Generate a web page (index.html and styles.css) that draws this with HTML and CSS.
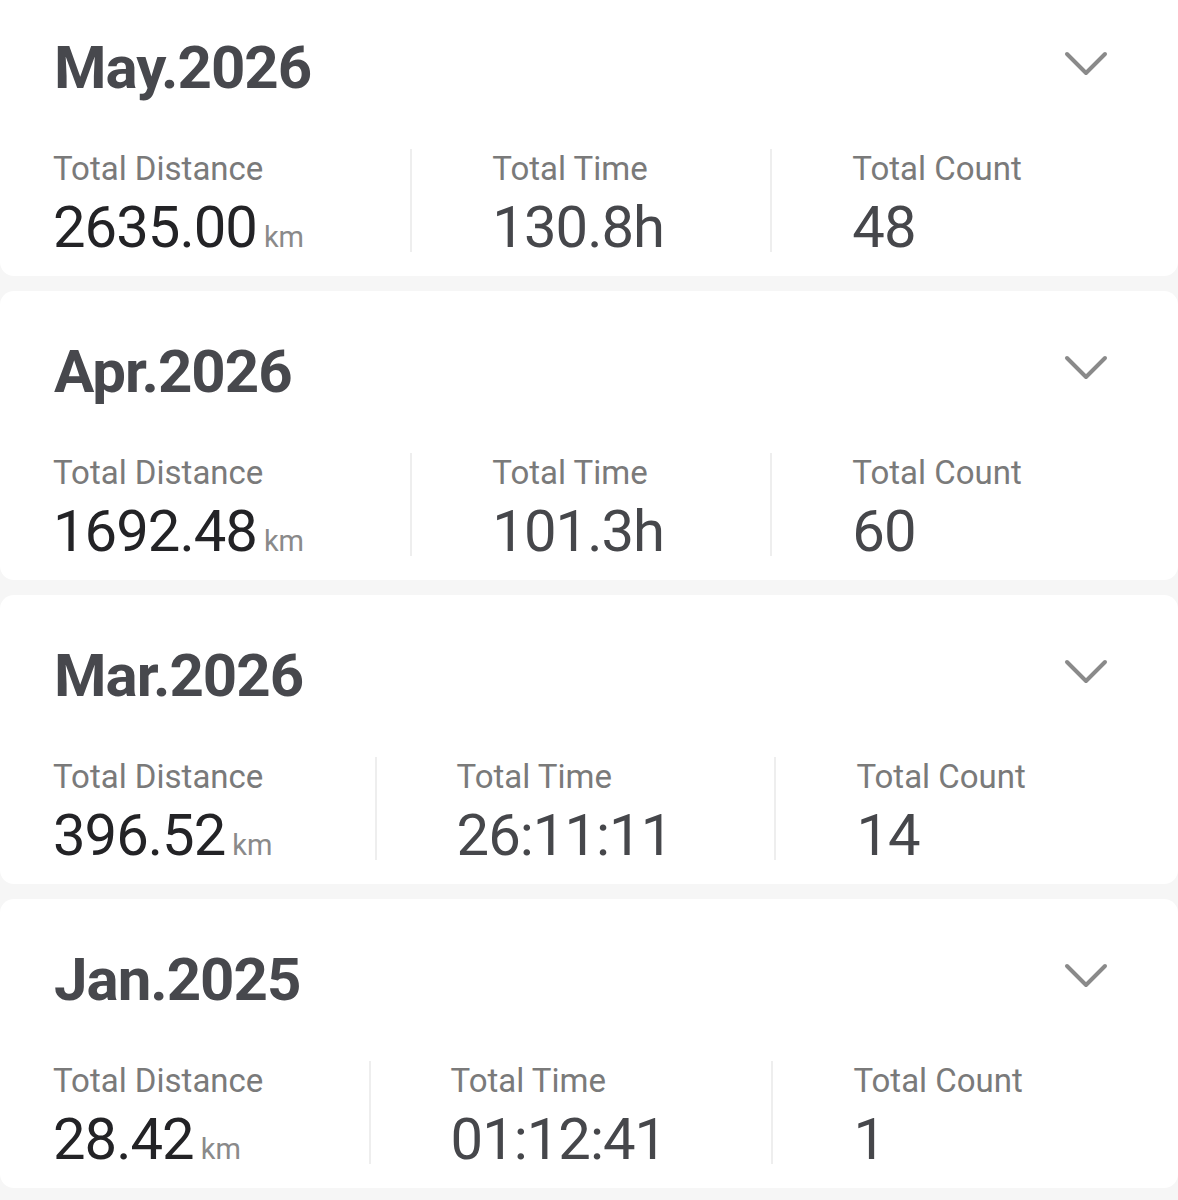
FILE: index.html
```html
<!DOCTYPE html>
<html>
<head>
  <link rel="stylesheet" href="styles.css">
</head>
<body>
  <div class="list">

    <div class="month-card">
      <div class="month-head">
        <span class="month-title">May.2026</span>
        <svg class="chevron" width="46" height="28" viewBox="0 0 46 28"><polyline points="4,4 23,23 42,4"/></svg>
      </div>
      <div class="stats">
        <div class="stat">
          <div class="stat-label">Total Distance</div>
          <div class="stat-value dark">2635.00<span class="unit">km</span></div>
        </div>
        <div class="stat">
          <div class="stat-label">Total Time</div>
          <div class="stat-value">130.8h</div>
        </div>
        <div class="stat">
          <div class="stat-label">Total Count</div>
          <div class="stat-value">48</div>
        </div>
      </div>
    </div>

    <div class="month-card">
      <div class="month-head">
        <span class="month-title">Apr.2026</span>
        <svg class="chevron" width="46" height="28" viewBox="0 0 46 28"><polyline points="4,4 23,23 42,4"/></svg>
      </div>
      <div class="stats">
        <div class="stat">
          <div class="stat-label">Total Distance</div>
          <div class="stat-value dark">1692.48<span class="unit">km</span></div>
        </div>
        <div class="stat">
          <div class="stat-label">Total Time</div>
          <div class="stat-value">101.3h</div>
        </div>
        <div class="stat">
          <div class="stat-label">Total Count</div>
          <div class="stat-value">60</div>
        </div>
      </div>
    </div>

    <div class="month-card">
      <div class="month-head">
        <span class="month-title">Mar.2026</span>
        <svg class="chevron" width="46" height="28" viewBox="0 0 46 28"><polyline points="4,4 23,23 42,4"/></svg>
      </div>
      <div class="stats">
        <div class="stat">
          <div class="stat-label">Total Distance</div>
          <div class="stat-value dark">396.52<span class="unit">km</span></div>
        </div>
        <div class="stat">
          <div class="stat-label">Total Time</div>
          <div class="stat-value">26:11:11</div>
        </div>
        <div class="stat">
          <div class="stat-label">Total Count</div>
          <div class="stat-value">14</div>
        </div>
      </div>
    </div>

    <div class="month-card">
      <div class="month-head">
        <span class="month-title">Jan.2025</span>
        <svg class="chevron" width="46" height="28" viewBox="0 0 46 28"><polyline points="4,4 23,23 42,4"/></svg>
      </div>
      <div class="stats">
        <div class="stat">
          <div class="stat-label">Total Distance</div>
          <div class="stat-value dark">28.42<span class="unit">km</span></div>
        </div>
        <div class="stat">
          <div class="stat-label">Total Time</div>
          <div class="stat-value">01:12:41</div>
        </div>
        <div class="stat">
          <div class="stat-label">Total Count</div>
          <div class="stat-value">1</div>
        </div>
      </div>
    </div>

  </div>
</body>
</html>
```

FILE: styles.css
```css
/* Page */

html, body {
  margin: 0;
  background-color: #f6f6f6;
  font-family: Roboto, "Noto Sans", sans-serif;
}

.list {
  display: flex;
  flex-direction: column;
  gap: 15px;
  margin-top: -13px;
}

/* One card per month */

.month-card {
  background-color: #fff;
  border-radius: 14px;
  height: 289px;
  box-sizing: border-box;
  padding-top: 51px;
}

.month-head {
  display: flex;
  justify-content: space-between;
  align-items: flex-start;
  padding: 0 69px 0 54px;
}

.month-title {
  font-size: 60px;
  line-height: 60px;
  font-weight: 700;
  letter-spacing: -1px;
  color: #47484d;
}

.chevron {
  margin-top: 12px;
}

.chevron polyline {
  fill: none;
  stroke: #8a8a8a;
  stroke-width: 4;
  stroke-linecap: round;
  stroke-linejoin: round;
}

/* Stats row */

.stats {
  display: flex;
  margin-top: 51px;
  padding: 0 50px 0 53px;
}

.stat {
  flex: 1 1 auto;
}

.stat + .stat {
  border-left: 2px solid #eeeeee;
  padding-left: 80px;
}

.stat-label {
  font-size: 33px;
  line-height: 40px;
  color: #7a7a7a;
}

.stat-value {
  margin-top: 23px;
  font-size: 58px;
  line-height: 30px;
  letter-spacing: -1px;
  color: #46474b;
  white-space: nowrap;
}

.stat-value.dark {
  color: #232326;
}

.unit {
  margin-left: 7px;
  font-size: 29px;
  letter-spacing: 0;
  color: #8a8a8a;
}
```
